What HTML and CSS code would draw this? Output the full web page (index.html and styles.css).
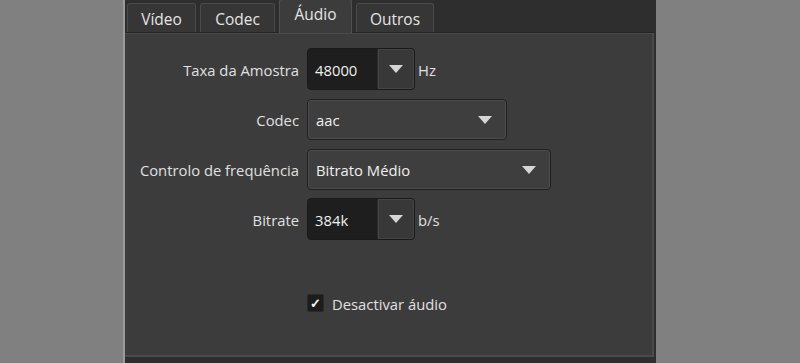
FILE: index.html
```html
<!DOCTYPE html>
<html lang="pt">
<head>
<meta charset="utf-8">
<link rel="stylesheet" href="styles.css">
</head>
<body>
<div class="app">
  <div class="tabs">
    <div class="tab t1">Vídeo</div>
    <div class="tab t2">Codec</div>
    <div class="tab active t3">Áudio</div>
    <div class="tab t4">Outros</div>
  </div>
  <div class="panel">
    <div class="form">
      <div class="label">Taxa da Amostra</div>
      <div class="field">
        <div class="ecombo"><span class="val">48000</span><span class="btn"><i class="tri"></i></span></div>
        <span class="unit">Hz</span>
      </div>
      <div class="label">Codec</div>
      <div class="field">
        <div class="combo w-codec"><span>aac</span><i class="tri"></i></div>
      </div>
      <div class="label">Controlo de frequência</div>
      <div class="field">
        <div class="combo w-rate"><span>Bitrato Médio</span><i class="tri"></i></div>
      </div>
      <div class="label">Bitrate</div>
      <div class="field">
        <div class="ecombo"><span class="val">384k</span><span class="btn"><i class="tri"></i></span></div>
        <span class="unit">b/s</span>
      </div>
    </div>
    <div class="check-row">
      <span class="box">✓</span>
      <span class="check-label">Desactivar áudio</span>
    </div>
  </div>
</div>
</body>
</html>
```
FILE: styles.css
```css
html, body {
  margin: 0;
  padding: 0;
  background: #808080;
  height: 363px;
  overflow: hidden;
}
body {
  font-family: "Open Sans", "Noto Sans", sans-serif;
  font-size: 14.8px;
  color: #dedede;
}
.app {
  margin-left: 123px;
  width: 531px;
  height: 363px;
  background: #2e2e2e;
  border-left: 2px solid #9a9a9a;
  display: flex;
  flex-direction: column;
  box-sizing: content-box;
}
.tabs {
  height: 32px;
  display: flex;
  align-items: flex-end;
  padding-left: 2px;
  gap: 4px;
  flex: none;
}
.tab {
  box-sizing: border-box;
  height: 29px;
  background: #363636;
  border: 1px solid #4a4a4a;
  border-bottom: none;
  border-radius: 3px 3px 0 0;
  display: flex;
  align-items: center;
  justify-content: center;
  color: #e4e4e4;
  font-size: 15.5px;
  padding-top: 1px;
}
.t1 { width: 69px; }
.t2 { width: 75px; }
.t3 { width: 73px; }
.t4 { width: 78px; }
.tab.active {
  height: 34px;
  margin-bottom: -1px;
  background: #3c3c3c;
  border-color: #505050;
  position: relative;
  z-index: 1;
  padding-top: 0;
  padding-bottom: 6px;
}
.panel {
  flex: 1;
  margin-right: 2px;
  margin-bottom: 6px;
  background: #3c3c3c;
  border-top: 1px solid #242424;
  box-shadow: inset 0 1px 0 #4a4a4a, inset -2px 0 0 #4a4a4a, inset 0 -2px 0 #4a4a4a;
  display: flex;
  flex-direction: column;
  padding-top: 15px;
}
.form {
  display: grid;
  grid-template-columns: 174px auto;
  column-gap: 8px;
  row-gap: 8px;
  align-items: center;
}
.label {
  text-align: right;
  color: #e0e0e0;
  padding-top: 2px;
}
.field {
  display: flex;
  align-items: center;
  gap: 3px;
  height: 42px;
}
.ecombo {
  box-sizing: border-box;
  width: 108px;
  height: 42px;
  display: flex;
  background: #1e1e1e;
  border: 1px solid #1a1a1a;
  border-radius: 4px;
  overflow: hidden;
}
.ecombo .val {
  width: 69px;
  padding-left: 7px;
  padding-top: 2px;
  box-sizing: border-box;
  display: flex;
  align-items: center;
  color: #f0f0f0;
}
.ecombo .btn {
  flex: 1;
  background: #383838;
  border-left: 1px solid #2a2a2a;
  box-shadow: inset 0 0 0 1px #454545;
  border-radius: 0 3px 3px 0;
  display: flex;
  align-items: center;
  justify-content: center;
}
.tri {
  display: block;
  width: 0;
  height: 0;
  border-left: 7px solid transparent;
  border-right: 7px solid transparent;
  border-top: 8px solid #d6d6d6;
}
.unit {
  color: #e0e0e0;
  padding-top: 2px;
}
.combo {
  box-sizing: border-box;
  height: 41px;
  display: flex;
  align-items: center;
  justify-content: space-between;
  padding: 2px 14px 0 8px;
  background: #3e3e3e;
  border: 1px solid #202020;
  box-shadow: inset 0 0 0 1px #4c4c4c;
  border-radius: 4px;
  color: #efefef;
}
.w-codec { width: 200px; }
.w-rate { width: 244px; }
.check-row {
  display: flex;
  align-items: center;
  gap: 8px;
  margin-top: 52px;
  margin-left: 182px;
}
.box {
  width: 17px;
  height: 18px;
  background: #1c1c1c;
  border: 1px solid #2a2a2a;
  border-radius: 2px;
  display: flex;
  align-items: center;
  justify-content: center;
  color: #f4f4f4;
  font-size: 13px;
  font-weight: bold;
  box-sizing: border-box;
}
.check-label {
  color: #e0e0e0;
  padding-top: 2px;
}
```
